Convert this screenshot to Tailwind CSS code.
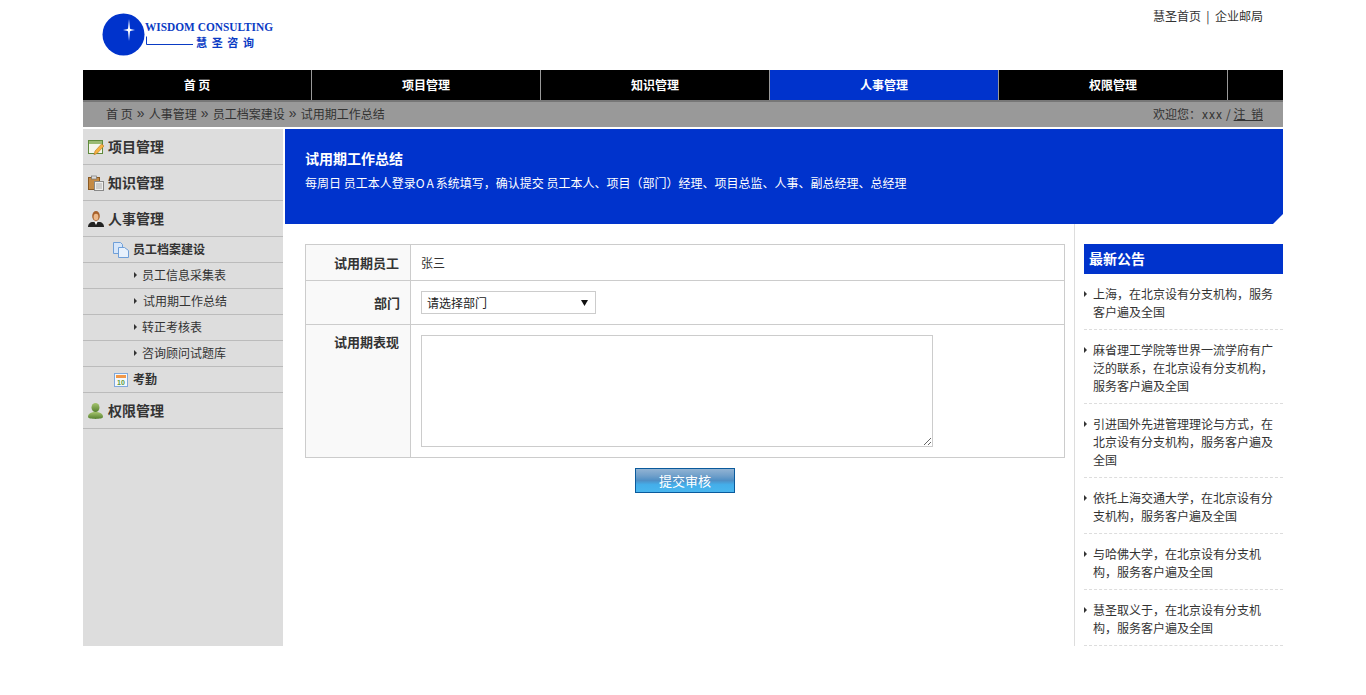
<!DOCTYPE html>
<html lang="zh-CN">
<head>
<meta charset="UTF-8">
<title>试用期工作总结</title>
<script src="https://cdn.jsdelivr.net/npm/@tailwindcss/browser@4"></script>
</head>
<body class="bg-white text-[12px] leading-[18px] text-[#333] font-['Noto_Sans_CJK_SC','Liberation_Sans',sans-serif]">
<div class="w-[1200px] ml-[83px]">

  <!-- header -->
  <div class="h-[70px] flex justify-between">
    <svg class="w-[240px] h-[70px]" viewBox="0 0 240 70">
      <circle cx="40.500" cy="34.500" r="21" fill="#0033cc"/>
      <path d="M46 19 L47 29 L52 30 L47 31 L46 41 L45 31 L40 30 L45 29 Z" fill="#fff"/>
      <circle cx="46" cy="30" r="1.800" fill="#fff"/>
      <text x="62" y="31" textLength="128" lengthAdjust="spacingAndGlyphs" font-family="Liberation Serif" font-weight="700" font-size="12" fill="#0a3bc4">WISDOM CONSULTING</text>
      <path d="M63.500 36.500V44.500H110" fill="none" stroke="#0a3bc4" stroke-width="1"/>
      <text x="113" y="46.500" textLength="58" font-family="Noto Sans CJK SC" font-weight="700" font-size="11" fill="#0a3bc4">慧圣咨询</text>
    </svg>
    <div class="mr-[20px] mt-[7px] flex whitespace-nowrap">
      <span>慧圣首页</span><span class="w-[14px] text-center">|</span><span>企业邮局</span>
    </div>
  </div>

  <!-- nav -->
  <div class="h-[30px] bg-black flex text-white font-bold text-center leading-[30px]">
    <div class="w-[229px] border-r border-[#999]">首 页</div>
    <div class="w-[229px] border-r border-[#999]">项目管理</div>
    <div class="w-[229px] border-r border-[#999]">知识管理</div>
    <div class="w-[229px] border-r border-[#999] bg-[#0033cc]">人事管理</div>
    <div class="w-[229px] border-r border-[#999]">权限管理</div>
  </div>

  <!-- breadcrumb -->
  <div class="h-[27px] bg-[#999] border-t-2 border-[#777] flex justify-between leading-[23px] pl-[23px] pr-[20px]">
    <div class="flex">
      <span>首 页</span><span class="w-[16px] text-center text-[14px] font-['Liberation_Sans']">»</span><span>人事管理</span><span class="w-[16px] text-center text-[14px] font-['Liberation_Sans']">»</span><span>员工档案建设</span><span class="w-[16px] text-center text-[14px] font-['Liberation_Sans']">»</span><span>试用期工作总结</span>
    </div>
    <div class="flex">
      <span>欢迎您：</span><span class="tracking-[1px] ml-[1px]">xxx</span><span class="mx-[3px]">/</span><span class="underline whitespace-pre">注  销</span>
    </div>
  </div>

  <div class="flex mt-[2px]">
    <!-- sidebar -->
    <div class="w-[200px] h-[517px] bg-[#ddd] shrink-0">
      <div class="h-[36px] pb-[2px] border-b border-[#bbb] flex items-center pl-[5px] gap-[4px] text-[14px] font-bold">
        <svg class="w-4 h-4 translate-y-px" viewBox="0 0 16 16"><rect x=".5" y="1.500" width="14" height="13" fill="#f4f6ec" stroke="#5f8a3c"/><rect x="1" y="2" width="13" height="3" fill="#9abb73"/><path d="M6 16l1-4 6.500-7 2.500 2-6.500 7z" fill="#f5b23f" stroke="#b8752a" stroke-width=".6"/></svg>
        项目管理</div>
      <div class="h-[36px] pb-[2px] border-b border-[#bbb] flex items-center pl-[5px] gap-[4px] text-[14px] font-bold">
        <svg class="w-4 h-4 translate-y-px" viewBox="0 0 16 16"><rect x=".5" y="2.500" width="11" height="12" fill="#c48a45" stroke="#8a5a24"/><rect x="3.500" y="1" width="5" height="3" fill="#ddd" stroke="#777" stroke-width=".7"/><rect x="6.500" y="6.500" width="9" height="9" fill="#eee" stroke="#888"/><path d="M8 9h6M8 11h6M8 13h6" stroke="#999" stroke-width=".8"/></svg>
        知识管理</div>
      <div class="h-[36px] pb-[2px] border-b border-[#bbb] flex items-center pl-[5px] gap-[4px] text-[14px] font-bold">
        <svg class="w-4 h-4 translate-y-px" viewBox="0 0 16 16"><path d="M0 16c0-3 2-5 5-5h6c3 0 5 2 5 5z" fill="#222"/><path d="M6.500 11l1.500 3 1.500-3z" fill="#fff"/><ellipse cx="8" cy="5" rx="3.800" ry="5" fill="#a8622c"/><ellipse cx="8" cy="6" rx="2.400" ry="3.200" fill="#edb98a"/></svg>
        人事管理</div>
      <div class="h-[26px] pb-[2px] border-b border-[#bbb] flex items-center pl-[30px] gap-[4px] font-bold">
        <svg class="w-4 h-4 translate-y-px" viewBox="0 0 16 16"><path d="M.5.5h7l2 2v9h-9z" fill="#d6e6fa" stroke="#6f9fd8"/><path d="M5.500 5.500h6l4 3v7h-10z" fill="#e8f1fc" stroke="#6f9fd8"/></svg>
        员工档案建设</div>
      <div class="h-[26px] pb-[2px] border-b border-[#bbb] flex items-center pl-[51px] gap-[5px]">
        <svg class="w-[3px] h-[6px]" viewBox="0 0 3 6"><path d="M0 0l3 3-3 3z" fill="#333"/></svg>员工信息采集表</div>
      <div class="h-[26px] pb-[2px] border-b border-[#bbb] flex items-center pl-[51px] gap-[6px]">
        <svg class="w-[3px] h-[6px]" viewBox="0 0 3 6"><path d="M0 0l3 3-3 3z" fill="#333"/></svg>试用期工作总结</div>
      <div class="h-[26px] pb-[2px] border-b border-[#bbb] flex items-center pl-[51px] gap-[5px]">
        <svg class="w-[3px] h-[6px]" viewBox="0 0 3 6"><path d="M0 0l3 3-3 3z" fill="#333"/></svg>转正考核表</div>
      <div class="h-[26px] pb-[2px] border-b border-[#bbb] flex items-center pl-[51px] gap-[5px]">
        <svg class="w-[3px] h-[6px]" viewBox="0 0 3 6"><path d="M0 0l3 3-3 3z" fill="#333"/></svg>咨询顾问试题库</div>
      <div class="h-[26px] pb-[2px] border-b border-[#bbb] flex items-center pl-[31px] gap-[5px] font-bold">
        <svg class="w-[14px] h-[14px] translate-y-px" viewBox="0 0 14 14"><rect x=".5" y=".5" width="13" height="13" fill="#f4f8fd" stroke="#7fa9dc"/><rect x="2" y="2" width="10" height="3" fill="#f0984a"/><text x="3" y="11.500" font-size="7" font-family="Liberation Sans" font-weight="700" fill="#5b9a3c">10</text></svg>
        考勤</div>
      <div class="h-[36px] pb-[2px] border-b border-[#bbb] flex items-center pl-[5px] gap-[5px] text-[14px] font-bold">
        <svg class="w-[15px] h-4 translate-y-px" viewBox="0 0 15 16"><defs><linearGradient id="gu" x1="0" y1="0" x2="0" y2="1"><stop offset="0" stop-color="#a5c46e"/><stop offset="1" stop-color="#56802f"/></linearGradient></defs><ellipse cx="7.500" cy="4.500" rx="4" ry="4.500" fill="url(#gu)"/><path d="M0 14c0-3.500 3-5 7.500-5s7.500 1.500 7.500 5c0 2.500-15 2.500-15 0z" fill="url(#gu)"/></svg>
        权限管理</div>
    </div>

    <!-- main -->
    <div class="ml-[2px] w-[998px]">
      <div class="h-[95px] bg-[#0033cc] text-white pl-[20px] pt-[19px] [clip-path:polygon(0_0,100%_0,100%_85px,988px_100%,0_100%)]">
        <div class="text-[14px] font-bold leading-[20px]">试用期工作总结</div>
        <div class="mt-[6px]">每周日 员工本人登录<span class="tracking-[2px]">OA</span>系统填写，确认提交 员工本人、项目（部门）经理、项目总监、人事、副总经理、总经理</div>
      </div>

      <div class="flex h-[422px]">
        <div class="w-[790px] border-r border-[#ddd] pl-[20px] pt-[20px]">
          <table class="w-[760px] border-collapse">
            <tbody>
              <tr class="h-[36px]">
                <th class="w-[105px] border border-[#ccc] bg-[#f9f9f9] text-right pr-[11px] text-[13px] font-bold">试用期员工</th>
                <td class="border border-[#ccc] pl-[10px]">张三</td>
              </tr>
              <tr class="h-[44px]">
                <th class="border border-[#ccc] bg-[#f9f9f9] text-right pr-[10px] text-[13px] font-bold">部门</th>
                <td class="border border-[#ccc] pl-[10px]">
                  <div class="w-[175px] h-[23px] border border-[#ccc] bg-white flex items-center justify-between pl-[5px] pr-[7px] text-[#222]">请选择部门
                    <svg class="w-[7px] h-[6px]" viewBox="0 0 7 6"><path d="M0 0h7L3.500 6z" fill="#111"/></svg>
                  </div>
                </td>
              </tr>
              <tr class="h-[133px]">
                <th class="border border-[#ccc] bg-[#f9f9f9] text-right pr-[11px] text-[13px] font-bold align-top pt-[8px]">试用期表现</th>
                <td class="border border-[#ccc] pl-[10px] align-top pt-[10px]">
                  <textarea class="block w-[512px] h-[112px] border border-[#ccc]"></textarea>
                </td>
              </tr>
            </tbody>
          </table>
          <div class="w-[760px] flex justify-center mt-[10px]">
            <button class="w-[100px] h-[25px] border border-[#0a5a9c] text-white text-[13px] leading-[22px] bg-[linear-gradient(#92b3d3_0%,#6f9fca_30%,#4f8fc5_50%,#44aeea_68%,#48b6ee_100%)]">提交审核</button>
          </div>
        </div>

        <!-- notices -->
        <div class="ml-[9px] w-[199px] pt-[20px]">
          <div class="h-[30px] bg-[#0033cc] text-white font-bold text-[14px] leading-[28px] pl-[5px]">最新公告</div>
          <div class="relative pt-[11px] pb-[8px] pl-[9px] border-b border-dashed border-[#ddd]">
            <svg class="absolute left-0 top-[17px] w-[3px] h-[6px]" viewBox="0 0 3 6"><path d="M0 0l3 3-3 3z" fill="#333"/></svg>上海，在北京设有分支机构，服务客户遍及全国</div>
          <div class="relative pt-[11px] pb-[8px] pl-[9px] border-b border-dashed border-[#ddd]">
            <svg class="absolute left-0 top-[17px] w-[3px] h-[6px]" viewBox="0 0 3 6"><path d="M0 0l3 3-3 3z" fill="#333"/></svg>麻省理工学院等世界一流学府有广泛的联系，在北京设有分支机构，服务客户遍及全国</div>
          <div class="relative pt-[11px] pb-[8px] pl-[9px] border-b border-dashed border-[#ddd]">
            <svg class="absolute left-0 top-[17px] w-[3px] h-[6px]" viewBox="0 0 3 6"><path d="M0 0l3 3-3 3z" fill="#333"/></svg>引进国外先进管理理论与方式，在北京设有分支机构，服务客户遍及全国</div>
          <div class="relative pt-[11px] pb-[8px] pl-[9px] border-b border-dashed border-[#ddd]">
            <svg class="absolute left-0 top-[17px] w-[3px] h-[6px]" viewBox="0 0 3 6"><path d="M0 0l3 3-3 3z" fill="#333"/></svg>依托上海交通大学，在北京设有分支机构，服务客户遍及全国</div>
          <div class="relative pt-[11px] pb-[8px] pl-[9px] border-b border-dashed border-[#ddd]">
            <svg class="absolute left-0 top-[17px] w-[3px] h-[6px]" viewBox="0 0 3 6"><path d="M0 0l3 3-3 3z" fill="#333"/></svg>与哈佛大学，在北京设有分支机构，服务客户遍及全国</div>
          <div class="relative pt-[11px] pb-[8px] pl-[9px] border-b border-dashed border-[#ddd]">
            <svg class="absolute left-0 top-[17px] w-[3px] h-[6px]" viewBox="0 0 3 6"><path d="M0 0l3 3-3 3z" fill="#333"/></svg>慧圣取义于，在北京设有分支机构，服务客户遍及全国</div>
        </div>
      </div>
    </div>
  </div>
</div>
</body>
</html>
